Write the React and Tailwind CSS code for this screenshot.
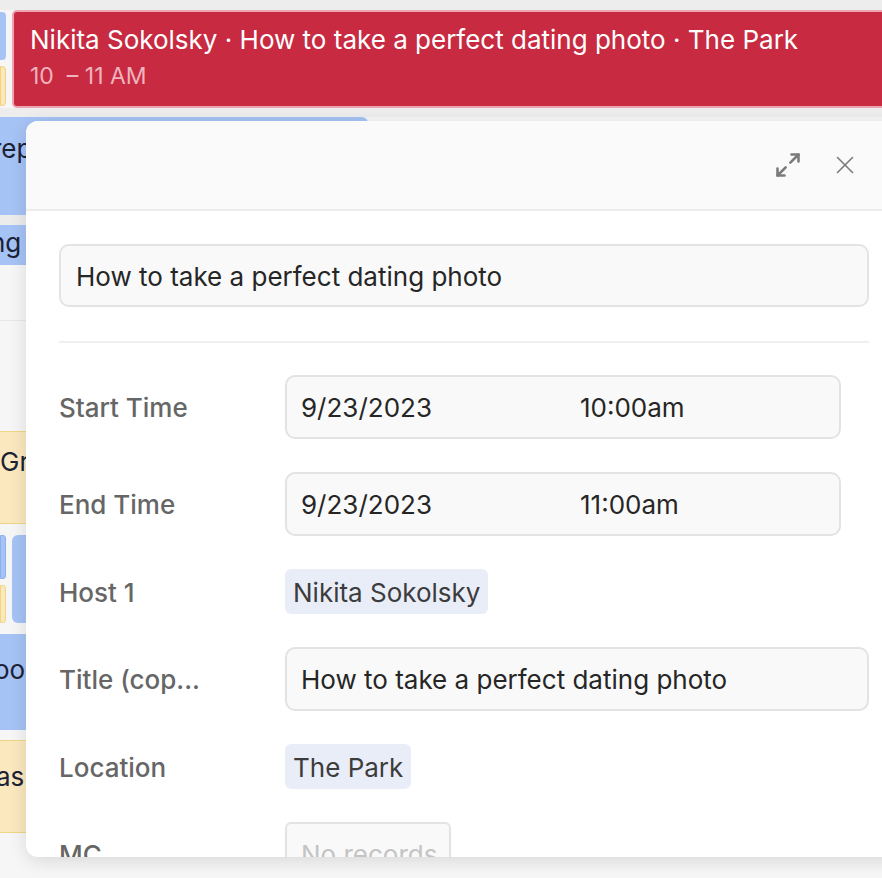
import { Maximize2, X } from 'lucide-react'

const font = { fontFamily: 'Inter, "Noto Sans", sans-serif' }

function Field({ label, children }) {
  return (
    <div className="flex items-center">
      <div className="w-[226px] shrink-0 whitespace-nowrap pt-[2px] text-[26px] font-medium leading-[34px] text-[#666666]">{label}</div>
      {children}
    </div>
  )
}

function Chip({ children }) {
  return (
    <span className="inline-flex h-[45px] items-center rounded-[6px] bg-[#e9edf8] px-[8px] pt-[1px] text-[26px] text-[#3c3c3c]">
      {children}
    </span>
  )
}

function Box({ className = '', children }) {
  return (
    <div
      className={`flex h-[64px] items-center whitespace-nowrap rounded-[10px] border-2 border-[#e3e3e3] bg-[#f9f9f9] px-[14px] pt-[1px] text-[26px] text-[#262626] ${className}`}
    >
      {children}
    </div>
  )
}

function App() {
  return (
    <div className="relative h-[878px] w-[882px] overflow-hidden bg-[#f6f6f6]" style={font}>
      {/* calendar behind */}
      <div className="flex flex-col">
        <div className="h-[10px] bg-[#ededed]" />
        <div className="flex h-[98px] gap-[6px]">
          <div className="flex w-[6px] flex-col gap-[6px] pt-[2px]">
            <div className="h-[48px] rounded-r-[4px] bg-[#a6c3f5]" />
            <div className="h-[40px] rounded-r-[4px] border border-[#f2d27a] bg-[#fbe8bf]" />
          </div>
          <div className="-mr-[20px] flex flex-1 flex-col rounded-[5px] border-2 border-[#eea3b1] bg-[#c82a41] px-[16px] pt-[11px]">
            <div className="whitespace-nowrap text-[26px] leading-[34px] text-white">
              Nikita Sokolsky · How to take a perfect dating photo · The Park
            </div>
            <div className="mt-[4px] whitespace-pre text-[23px] leading-[30px] text-[#efb3bd]">10  – 11 AM</div>
          </div>
        </div>
        <div className="h-[9px] bg-[#ededed]" />
        <div className="h-[98px] w-[368px] rounded-r-[6px] bg-[#a6c3f5] pt-[12px] text-[26px] text-[#1b2235]">
          <span className="-ml-[8px]">rep</span>
        </div>
        <div className="h-[10px] bg-[#ececec]" />
        <div className="h-[40px] w-[368px] bg-[#a6c3f5] text-[26px] leading-[36px] text-[#1b2235]">
          <span className="-ml-[10px]">ng</span>
        </div>
        <div className="h-[55px]" />
        <div className="h-px bg-[#e6e6e6]" />
        <div className="h-[110px]" />
        <div className="h-[93px] w-[368px] border-y border-[#f0d584] bg-[#fbe8bf] pt-[10px] text-[26px] text-[#1b2235]">
          Gr
        </div>
        <div className="flex h-[110px] gap-[6px] py-[11px]">
          <div className="flex w-[6px] flex-col gap-[6px]">
            <div className="h-[47px] rounded-r-[3px] border border-[#8fb0ee] bg-[#a6c3f5]" />
            <div className="h-[40px] rounded-r-[3px] border border-[#f0d584] bg-[#fbe8bf]" />
          </div>
          <div className="w-[350px] rounded-[6px] bg-[#a6c3f5]" />
        </div>
        <div className="h-[96px] w-[368px] bg-[#a6c3f5] pt-[16px] text-[26px] text-[#1b2235]">
          <span className="-ml-[6px]">oo</span>
        </div>
        <div className="h-[10px]" />
        <div className="h-[93px] w-[368px] border-y border-[#f0d584] bg-[#fbe8bf] pt-[16px] text-[26px] text-[#1b2235]">
          <span className="-ml-[4px]">as</span>
        </div>
      </div>

      {/* event detail panel */}
      <div className="absolute left-[26px] top-[121px] flex h-[736px] w-[880px] flex-col overflow-hidden rounded-[12px] bg-white shadow-[0_4px_18px_rgba(0,0,0,0.12)]">
        <div className="flex h-[90px] shrink-0 items-center justify-end gap-[28px] border-b-2 border-[#ececec] bg-[#fafafa] pr-[46px]">
          <Maximize2 className="h-[28px] w-[28px] text-[#7a7a7a]" strokeWidth={2.2} />
          <X className="h-[30px] w-[30px] text-[#7a7a7a]" strokeWidth={1.3} />
        </div>
        <div className="flex flex-col pl-[33px] pr-[14px] pt-[33px]">
          <div className="flex h-[63px] w-[810px] items-center rounded-[10px] border-2 border-[#e3e3e3] bg-[#f9f9f9] px-[15px] pt-[1px] text-[26px] text-[#262626]">
            How to take a perfect dating photo
          </div>
          <div className="mt-[34px] h-[2px] w-[810px] bg-[#f0f0f0]" />
          <div className="mt-[32px] flex flex-col gap-[33px]">
            <Field label="Start Time">
              <Box className="w-[556px]">
                <span className="w-[279px]">9/23/2023</span>
                <span>10:00am</span>
              </Box>
            </Field>
            <Field label="End Time">
              <Box className="w-[556px]">
                <span className="w-[279px]">9/23/2023</span>
                <span>11:00am</span>
              </Box>
            </Field>
            <Field label="Host 1">
              <Chip>Nikita Sokolsky</Chip>
            </Field>
            <Field label="Title (cop...">
              <Box className="w-[584px]">How to take a perfect dating photo</Box>
            </Field>
            <Field label="Location">
              <Chip>The Park</Chip>
            </Field>
            <Field label="MC">
              <Box className="w-[166px] !rounded-[6px] text-[#c4c4c4]">No records</Box>
            </Field>
          </div>
        </div>
      </div>
    </div>
  )
}

export default App
